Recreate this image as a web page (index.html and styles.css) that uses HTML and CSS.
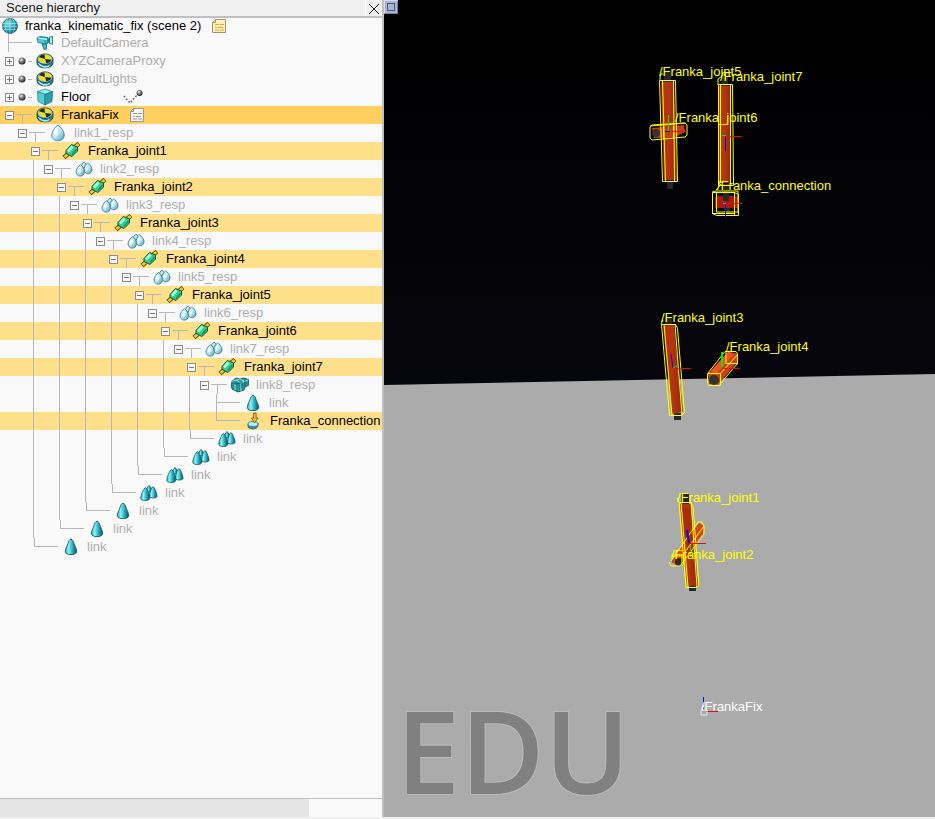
FILE: index.html
```
<!DOCTYPE html>
<html lang="en">
<head>
<meta charset="utf-8">
<title>Scene hierarchy</title>
<link rel="stylesheet" href="styles.css">
</head>
<body>
<svg class="sprites" aria-hidden="true">
  <defs>
    <linearGradient id="g-egg" x1="0" x2="1" y1="0" y2="1"><stop offset="0" stop-color="#f2ffff"/><stop offset=".55" stop-color="#b2e6f5"/><stop offset="1" stop-color="#4a9ab2"/></linearGradient>
    <linearGradient id="g-cone" x1="0" x2="1"><stop offset="0" stop-color="#23b5bd"/><stop offset=".3" stop-color="#8cf4f6"/><stop offset=".6" stop-color="#2fb3c2"/><stop offset="1" stop-color="#0b4f68"/></linearGradient>
    <radialGradient id="g-ball" cx=".4" cy=".35" r=".7"><stop offset="0" stop-color="#fff"/><stop offset=".3" stop-color="#999"/><stop offset="1" stop-color="#111"/></radialGradient>
    <radialGradient id="g-globe" cx=".4" cy=".35" r=".7"><stop offset="0" stop-color="#7fe0e4"/><stop offset=".6" stop-color="#2a9fae"/><stop offset="1" stop-color="#0d5068"/></radialGradient>
    <symbol id="globe" viewBox="0 0 18 18"><circle cx="9" cy="9" r="7.500" fill="url(#g-globe)" stroke="#1d6175" stroke-width=".8"/><path d="M2 6.500h14M1.500 9.500h15M3 12.500h12M9 1.500v15M6.500 2c-3 4-3 10 0 14M11.500 2c3 4 3 10 0 14" fill="none" stroke="#b9f3f2" stroke-width=".5"/></symbol>
    <symbol id="camera" viewBox="0 0 18 18"><path d="M1 4l3-1.500 8 1V9l-2 1-8-1.500z" fill="#2fb0ba" stroke="#176a77" stroke-width=".8"/><path d="M2 4.200l9 1" fill="none" stroke="#b5f7f5" stroke-width="1.500"/><path d="M2 6v2l6 1V6.500z" fill="#4fd3d9"/><path d="M12 4.500l2-.5v5l-2-.5z" fill="#1d8290"/><path d="M13.500 3l3-.7v8l-3-.8z" fill="#9eeef2" stroke="#24606b" stroke-width=".8"/><path d="M6 10h4.500v5L8 15.500z" fill="#38bdc6" stroke="#1b6c7a" stroke-width=".8"/></symbol>
    <symbol id="dummy" viewBox="0 0 18 18"><path d="M1 7.500v3.500c0 6.500 16 6.500 16 0V7.500z" fill="#2d7f99" stroke="#123c4b" stroke-width=".8"/><path d="M2.500 11c2 4 8 5 11 2.500" fill="none" stroke="#a9eef4" stroke-width="1.600"/><ellipse cx="9" cy="7.200" rx="8" ry="5.300" fill="#70bfcb" stroke="#174656" stroke-width=".9"/><ellipse cx="9" cy="6.900" rx="6.500" ry="4.300" fill="#f0dc22"/><path d="M9 6.900L3 5.200C4 3.600 6 2.700 8.500 2.600zM9 6.900l6.400.8c-.4 1.700-2.400 3-5 3.500z" fill="#222820"/></symbol>
    <symbol id="cube" viewBox="0 0 18 18"><path d="M9 1l7.500 2.500L9 6.500 1.500 3.500z" fill="#8ff0ed" stroke="#237985" stroke-width=".7"/><path d="M1.500 3.500L9 6.500V17l-7-3.500z" fill="#4fcfd2" stroke="#237985" stroke-width=".7"/><path d="M16.500 3.500L9 6.500V17l7-3.500z" fill="#2a9fa8" stroke="#1c6873" stroke-width=".7"/></symbol>
    <symbol id="egg" viewBox="0 0 18 18"><path d="M9 1.200C6 3 2.800 7.500 2.800 11c0 3.700 2.500 5.700 6.200 5.700s6.200-2 6.200-5.700c0-3.500-3.200-8-6.200-9.800z" fill="url(#g-egg)" stroke="#3b7183" stroke-width=".8"/><ellipse cx="7" cy="8" rx="2" ry="3.500" fill="#fff"/></symbol>
    <symbol id="eggs" viewBox="0 0 18 18"><g fill="url(#g-egg)" stroke="#3b7183" stroke-width=".8"><path d="M9 2c-2 1-3 4-2 6h4c1-2 0-5-2-6z"/><path d="M12.500 3c-2 1.500-3.800 4.500-3.500 7 .4 5 7.500 5 8 0 .3-3-2.500-6-4.500-7z"/><path d="M5.500 4.500C3.500 6 1 9 1 12c.4 5.500 8 5.500 8.400 0 .1-3-2-6-3.900-7.500z"/></g><ellipse cx="4.500" cy="10" rx="1.400" ry="2.600" fill="#fff"/><ellipse cx="12" cy="8" rx="1.200" ry="2.400" fill="#fff"/></symbol>
    <symbol id="joint" viewBox="0 0 18 18"><path d="M13 5l4-3.500M6 12l-4 3.500" stroke="#5c4200" stroke-width="4.400"/><path d="M13 5l3.500-3M6 12l-3.500 3" stroke="#f5cf20" stroke-width="2.800"/><path d="M9.500 2.500L15.500 5v4L10 14.500l-6-3v-3z" fill="#2fd08e" stroke="#134d38" stroke-width="1"/><path d="M10.500 4.500L6 9.500" stroke="#a8ffdc" stroke-width="2.800"/><path d="M14.500 7L10 12.500" stroke="#18935f" stroke-width="1.500"/></symbol>
    <symbol id="cone" viewBox="0 0 18 18"><path d="M9 1.300C7.500 1.300 6.800 3 6 5.500 5 8.500 3.300 11 3.300 13.500c.2 4.200 11.200 4.200 11.400 0 0-2.500-1.700-5-2.700-8-.8-2.500-1.500-4.200-3-4.200z" fill="url(#g-cone)" stroke="#1f5665" stroke-width=".9"/></symbol>
    <symbol id="cones" viewBox="0 0 18 18"><g fill="url(#g-cone)" stroke="#145563" stroke-width=".8"><path d="M9 1.500C7.500 2 6 7 6.500 8h5C12 7 10.500 2 9 1.500z"/><path d="M13 2.500c-1.500.5-4 8-3.600 10 .6 2 7 2 7.600 0 .3-2-2.500-9.500-4-10z"/><path d="M5.500 3.500c-1.700.5-5 8.500-4.700 11 .6 2.700 8.400 2.700 8.900 0 .3-2.500-2.500-10.500-4.200-11z"/></g></symbol>
    <symbol id="blocks" viewBox="0 0 18 18"><path d="M0 6l5-4 4 1 4-1 5 2v5l-4 2-1 3-6 2-6-3z" fill="#269399" stroke="#145159" stroke-width=".9"/><path d="M0 6l5-2 5 3v8M5 4l4-1 4 2-3 2M10 7l7-3M4 8v6" fill="none" stroke="#8be8df" stroke-width="1"/><path d="M1 6l3 2 6-1M11 6v6M14 5v5" fill="none" stroke="#17676d"/></symbol>
    <symbol id="sensor" viewBox="0 0 18 18"><path d="M4 12v2.500c1 3.500 10 3 10-1V11z" fill="#3193ad" stroke="#16566c" stroke-width=".8"/><ellipse cx="9" cy="12" rx="5" ry="2.500" fill="#b5f0f6" stroke="#28758c" stroke-width=".8"/><path d="M9.500 1h2.600v5h2L10.500 11 7.500 6h2z" fill="#f3b92d" stroke="#74501b" stroke-width=".8"/></symbol>
    <symbol id="ball" viewBox="0 0 8 8"><circle cx="4" cy="4" r="3.500" fill="url(#g-ball)"/></symbol>
    <symbol id="script" viewBox="0 0 16 16"><path class="paper" d="M4.500 1.500h10v13h-13v-10z"/><path class="fold" d="M1.500 4.500h3v-3"/><path class="ink" d="M4 6.500h4m1 0h4M4 9.500h2m1 0h5M4 12h4m1 0h4"/></symbol>
    <symbol id="dynamic" viewBox="0 0 20 16"><path d="M1 7l6 7 8-9" fill="none" stroke="#444" stroke-width="1.300" stroke-dasharray="1.500 2"/><circle cx="16.500" cy="4" r="3" fill="url(#g-ball)"/></symbol>
  </defs>
</svg>
<main class="app">
  <section class="panel" aria-labelledby="panel-title">
    <header class="panel-head">
      <h1 id="panel-title">Scene hierarchy</h1>
      <button class="close" aria-label="Close"><svg viewBox="0 0 12 12"><path d="M1 1l10 10M11 1L1 11"/></svg></button>
    </header>
    <ul class="tree">
      <li class="row root"><svg class="icon"><use href="#globe"/></svg><span class="name">franka_kinematic_fix (scene 2)</span><svg class="badge amber"><use href="#script"/></svg></li>
      <li class="row dim"><i class="branch more"></i><svg class="icon"><use href="#camera"/></svg><span class="name">DefaultCamera</span></li>
      <li class="row dim"><button class="toggle closed" aria-label="Expand"></button><svg class="ball"><use href="#ball"/></svg><i class="dash"></i><svg class="icon"><use href="#dummy"/></svg><span class="name">XYZCameraProxy</span></li>
      <li class="row dim"><button class="toggle closed" aria-label="Expand"></button><svg class="ball"><use href="#ball"/></svg><i class="dash"></i><svg class="icon"><use href="#dummy"/></svg><span class="name">DefaultLights</span></li>
      <li class="row"><button class="toggle closed" aria-label="Expand"></button><svg class="ball"><use href="#ball"/></svg><i class="dash"></i><svg class="icon"><use href="#cube"/></svg><span class="name">Floor</span><svg class="badge motion"><use href="#dynamic"/></svg></li>
      <li class="row last-picked"><button class="toggle" aria-label="Collapse"></button><i class="tee"></i><svg class="icon"><use href="#dummy"/></svg><span class="name">FrankaFix</span><svg class="badge"><use href="#script"/></svg></li>
      <li class="row dim" style="--depth:1"><i class="indent"></i><button class="toggle" aria-label="Collapse"></button><i class="tee"></i><svg class="icon"><use href="#egg"/></svg><span class="name">link1_resp</span></li>
      <li class="row picked" style="--depth:2"><i class="indent"></i><button class="toggle" aria-label="Collapse"></button><i class="tee"></i><svg class="icon"><use href="#joint"/></svg><span class="name">Franka_joint1</span></li>
      <li class="row dim" style="--depth:3"><i class="indent"></i><button class="toggle" aria-label="Collapse"></button><i class="tee"></i><svg class="icon"><use href="#eggs"/></svg><span class="name">link2_resp</span></li>
      <li class="row picked" style="--depth:4"><i class="indent"></i><button class="toggle" aria-label="Collapse"></button><i class="tee"></i><svg class="icon"><use href="#joint"/></svg><span class="name">Franka_joint2</span></li>
      <li class="row dim" style="--depth:5"><i class="indent"></i><button class="toggle" aria-label="Collapse"></button><i class="tee"></i><svg class="icon"><use href="#eggs"/></svg><span class="name">link3_resp</span></li>
      <li class="row picked" style="--depth:6"><i class="indent"></i><button class="toggle" aria-label="Collapse"></button><i class="tee"></i><svg class="icon"><use href="#joint"/></svg><span class="name">Franka_joint3</span></li>
      <li class="row dim" style="--depth:7"><i class="indent"></i><button class="toggle" aria-label="Collapse"></button><i class="tee"></i><svg class="icon"><use href="#eggs"/></svg><span class="name">link4_resp</span></li>
      <li class="row picked" style="--depth:8"><i class="indent"></i><button class="toggle" aria-label="Collapse"></button><i class="tee"></i><svg class="icon"><use href="#joint"/></svg><span class="name">Franka_joint4</span></li>
      <li class="row dim" style="--depth:9"><i class="indent"></i><button class="toggle" aria-label="Collapse"></button><i class="tee"></i><svg class="icon"><use href="#eggs"/></svg><span class="name">link5_resp</span></li>
      <li class="row picked" style="--depth:10"><i class="indent"></i><button class="toggle" aria-label="Collapse"></button><i class="tee"></i><svg class="icon"><use href="#joint"/></svg><span class="name">Franka_joint5</span></li>
      <li class="row dim" style="--depth:11"><i class="indent"></i><button class="toggle" aria-label="Collapse"></button><i class="tee"></i><svg class="icon"><use href="#eggs"/></svg><span class="name">link6_resp</span></li>
      <li class="row picked" style="--depth:12"><i class="indent"></i><button class="toggle" aria-label="Collapse"></button><i class="tee"></i><svg class="icon"><use href="#joint"/></svg><span class="name">Franka_joint6</span></li>
      <li class="row dim" style="--depth:13"><i class="indent"></i><button class="toggle" aria-label="Collapse"></button><i class="tee"></i><svg class="icon"><use href="#eggs"/></svg><span class="name">link7_resp</span></li>
      <li class="row picked" style="--depth:14"><i class="indent"></i><button class="toggle" aria-label="Collapse"></button><i class="tee"></i><svg class="icon"><use href="#joint"/></svg><span class="name">Franka_joint7</span></li>
      <li class="row dim" style="--depth:15"><i class="indent"></i><button class="toggle" aria-label="Collapse"></button><i class="tee"></i><svg class="icon"><use href="#blocks"/></svg><span class="name">link8_resp</span></li>
      <li class="row dim" style="--depth:16"><i class="indent"></i><i class="branch more"></i><svg class="icon"><use href="#cone"/></svg><span class="name">link</span></li>
      <li class="row picked" style="--depth:16"><i class="indent"></i><i class="branch"></i><svg class="icon"><use href="#sensor"/></svg><span class="name">Franka_connection</span></li>
      <li class="row dim" style="--depth:14"><i class="indent"></i><i class="branch"></i><svg class="icon"><use href="#cones"/></svg><span class="name">link</span></li>
      <li class="row dim" style="--depth:12"><i class="indent"></i><i class="branch"></i><svg class="icon"><use href="#cones"/></svg><span class="name">link</span></li>
      <li class="row dim" style="--depth:10"><i class="indent"></i><i class="branch"></i><svg class="icon"><use href="#cones"/></svg><span class="name">link</span></li>
      <li class="row dim" style="--depth:8"><i class="indent"></i><i class="branch"></i><svg class="icon"><use href="#cones"/></svg><span class="name">link</span></li>
      <li class="row dim" style="--depth:6"><i class="indent"></i><i class="branch"></i><svg class="icon"><use href="#cone"/></svg><span class="name">link</span></li>
      <li class="row dim" style="--depth:4"><i class="indent"></i><i class="branch"></i><svg class="icon"><use href="#cone"/></svg><span class="name">link</span></li>
      <li class="row dim" style="--depth:2"><i class="indent"></i><i class="branch"></i><svg class="icon"><use href="#cone"/></svg><span class="name">link</span></li>
    </ul>
    <div class="scroll"><div class="thumb"></div></div>
  </section>
  <section class="view" aria-label="Scene view">
    <svg class="scene" viewBox="384 0 551 817" preserveAspectRatio="xMinYMin slice">
      <defs>
        <linearGradient id="sky" x1="0" x2="0" y1="0" y2="1"><stop offset="0" stop-color="#000"/><stop offset="1" stop-color="#06060d"/></linearGradient>
        <linearGradient id="rod" x1="0" x2="1"><stop offset="0" stop-color="#b93212"/><stop offset=".5" stop-color="#b33413"/><stop offset="1" stop-color="#8f290e"/></linearGradient>
      </defs>
      <rect x="384" width="551" height="400" fill="url(#sky)"/>
      <path d="M384 385L935 374V817H384z" fill="#ababab"/>
      <text class="edu" x="396" y="794">EDU</text>

      <g class="cap"><path d="M664 72h7v10h-7zM667 181h6v8h-6zM722 72h6v14h-6zM723 184h6v12h-6z"/></g>
      <path d="M661 82h13l3 98h-13z" fill="url(#rod)"/>
      <path d="M652 128l32-3 1 7-10 5-21 1z" fill="#c53d17"/>
      <circle cx="656" cy="133" r="4" fill="#333"/>
      <path d="M719 86h12v97h-12z" fill="url(#rod)"/>
      <path d="M715 197l3-1h18l2 1v11h-23z" fill="#b11414"/>
      <path class="cap" d="M723 192h6v9h-6zM724 208h6v6h-6z"/>
      <g class="wire">
        <path d="M659.500 80.500h16l2 101h-15zM662.500 80.500l3 101M660 80v-3l1-3h2M673.500 80.500l1 101M650 127l2-2 33-2 2 2v10l-2 2-33 3-2-2zM650 126l24-2 11-1M673.500 126v13M663.500 126v13"/>
        <path d="M718.500 84.500h14l1 101h-15zM720.500 84v99M730.500 84v100M718 85v-6l4-3M716 190l2-2 3-4"/>
        <path d="M712.500 192.500h22l4 2v21h-22l-4-2zM716.500 192v20h22M734.500 192v23M712 192l4-1h22v21M712 213.500h22"/>
      </g>
      <g class="axis"><path class="z" d="M725.500 136v15M725.500 204v14M665 131.500h5"/><path class="y" d="M668.500 115v16M722 135.500h4M723 203.500h3"/><path class="x" d="M672 131.500h14M725 136.500h17M727 203.500h15"/></g>

      <g class="cap"><path d="M665 318h7v8h-7zM674 413h7v7h-7z"/></g>
      <path d="M663 326l11-1 9 87-11 2z" fill="url(#rod)"/>
      <path d="M708 374l20-22 9 1 1 8-20 24-9-1z" fill="#c9401b"/>
      <path d="M713 373l18-20" stroke="#ec5325" stroke-width="6"/>
      <circle cx="714" cy="380" r="5" fill="#303629"/>
      <g class="wire"><path d="M661.500 324.500h14l2 4 7 84-3 3h-12zM664 324l8 91M675 324l7 91M661 324l2-4M707.500 373.500h13v12h-12l-1-2zM708 373l17-21.500h11l1.500 2v10l-17 20M721 373l17-19M726 352v11.500h12"/></g>
      <g class="axis"><path class="z" d="M673 368l-2-14"/><path class="y thick" d="M722 352v15"/><path class="y" d="M673 368l5-3"/><path class="x" d="M674 368.500h17M724 368.500h16"/></g>

      <path class="cap" d="M681 494h8v10h-8zM689 586h7v5h-7z"/>
      <path d="M680 504h11l7 82h-11z" fill="url(#rod)"/>
      <path d="M672 560l27-37 5 3-1 8-24 31-7-2z" fill="#d14720"/>
      <path d="M682 508h9l5 51h-9z" fill="#a82d0f"/>
      <circle cx="679" cy="562" r="4" fill="#2c2c24"/>
      <g class="wire"><path d="M679 502.500h12l2 4 6 79-3 2h-10zM681 502l7 85M691 502l6 85M671 561l27-39h4l2 4v8l-24 32h-9l-2-4M671 556h11v10M682 556l22-30M679 502l-2-4"/></g>
      <g class="axis"><path class="z thick" d="M689 543l-2-13"/><path class="y" d="M690.500 546v11"/><path class="x" d="M690 543.500h16"/></g>

      <g class="axis"><path class="z" d="M703.500 697v12"/><path class="y" d="M706.500 704v7"/><path class="x" d="M706 711.500h12"/></g>
      <path d="M701 711v4h6v-5h-5l2-5" fill="none" stroke="#eee"/>

      <g class="labels">
        <text x="659" y="76">/Franka_joint5</text>
        <text x="720" y="81">/Franka_joint7</text>
        <text x="675" y="122">/Franka_joint6</text>
        <text x="717" y="190">/Franka_connection</text>
        <text x="661" y="322">/Franka_joint3</text>
        <text x="726" y="351">/Franka_joint4</text>
        <text x="677" y="502">/Franka_joint1</text>
        <text x="671" y="559">/Franka_joint2</text>
        <text class="base" x="701" y="711">/FrankaFix</text>
      </g>
    </svg>
    <button class="view-button" aria-label="View options"></button>
  </section>
</main>
</body>
</html>
```
FILE: styles.css
```
* { box-sizing: border-box; }

body {
  margin: 0;
  background: #f0f0f0;
  color: #000;
  font: 13px/18px "Liberation Sans", Arial, sans-serif;
}

button { padding: 0; border: 0; border-radius: 0; }
.sprites { position: absolute; width: 0; height: 0; }

.app {
  display: grid;
  grid-template-columns: 384px 1fr;
  height: 100vh;
  padding-bottom: 2px;
}

/* Hierarchy panel */
.panel {
  display: flex;
  flex-direction: column;
  min-width: 0;
  min-height: 0;
  background: #f9f9f9;
  border-right: 2px solid #c0c0c0;
}
.panel-head {
  display: flex;
  flex: none;
  height: 18px;
  background: #f0f0f0;
  border-bottom: 2px solid #c0c0c0;
}
.panel-head h1 {
  flex: 1;
  margin: 0;
  padding-left: 6px;
  font-size: 13px;
  font-weight: 400;
  line-height: 15px;
  color: #222;
}
.close {
  width: 17px;
  background: #f0f0f0;
  border-left: 1px solid #fff;
}
.close svg { display: block; width: 12px; height: 12px; margin: 2px auto 0; }
.close path { stroke: #222; stroke-width: 1; }

.tree {
  flex: 1;
  min-height: 0;
  margin: 0;
  padding: 0;
  overflow: hidden;
  list-style: none;
}
.row {
  display: flex;
  align-items: center;
  height: 18px;
  padding-left: 5px;
  white-space: nowrap;
}
.root { height: 16px; padding-left: 1px; }
.root .name { margin-left: 6px; }
.dim { color: #aeaeae; }
.picked { background: #ffe08a; }
.last-picked { background: #ffd060; }

.icon { flex: none; width: 18px; height: 18px; }
.name { margin-left: 7px; }
.picked .name { margin-left: 8px; }

/* Ancestor guides run through every second level */
.indent {
  flex: none;
  align-self: stretch;
  width: calc((var(--depth) - 1) * 13px);
  margin-left: 13px;
  background: repeating-linear-gradient(90deg, transparent 0 15px, #b8b8b8 15px 16px, transparent 16px 26px);
}

.toggle {
  position: relative;
  flex: none;
  width: 9px;
  height: 9px;
  margin-right: 1px;
  border: 1px solid #8c8c8c;
  background: linear-gradient(#777, #777) center / 5px 1px no-repeat #fafafa;
}
.closed {
  background:
    linear-gradient(#777, #777) center / 5px 1px no-repeat,
    linear-gradient(#777, #777) center / 1px 5px no-repeat,
    #fafafa;
}
.tee {
  flex: none;
  align-self: stretch;
  width: 16px;
  margin: 0 4px 0 1px;
  background:
    linear-gradient(#b8b8b8, #b8b8b8) 0 8px / 16px 1px no-repeat,
    linear-gradient(#b8b8b8, #b8b8b8) 6px 8px / 1px 10px no-repeat;
}
.branch {
  flex: none;
  align-self: stretch;
  width: 24px;
  margin: 0 4px 0 3px;
  background:
    linear-gradient(#b8b8b8, #b8b8b8) 0 8px / 24px 1px no-repeat,
    linear-gradient(#b8b8b8, #b8b8b8) 0 0 / 1px 9px no-repeat;
}
.more {
  background:
    linear-gradient(#b8b8b8, #b8b8b8) 0 8px / 24px 1px no-repeat,
    linear-gradient(#b8b8b8, #b8b8b8) 0 0 / 1px 18px no-repeat;
}
.ball { flex: none; width: 8px; height: 8px; margin-left: 3px; }
.dash { width: 4px; height: 1px; margin: 0 4px 0 2px; background: #b8b8b8; }

.badge { flex: none; width: 16px; height: 16px; margin-left: 10px; }
.motion { width: 20px; margin-left: 32px; }
.badge { --paper: #f4f4ee; --edge: #999; --ink: #999; }
.amber { --paper: #fff1c4; --edge: #a89565; --ink: #efa20b; }
.paper { fill: var(--paper); stroke: var(--edge); }
.fold { fill: none; stroke: var(--edge); }
.ink { stroke: var(--ink); }

.scroll {
  flex: none;
  height: 19px;
  border-top: 1px solid #c0c0c0;
}
.thumb { width: 81%; height: 18px; background: #e4e4e4; }

/* Scene view */
.view { position: relative; min-width: 0; min-height: 0; overflow: hidden; background: #ababab; }
.scene { display: block; width: 100%; height: 100%; }
.view-button {
  position: absolute;
  top: 0;
  left: 0;
  display: grid;
  place-items: center;
  width: 14px;
  height: 14px;
  background: #a6b5d5;
  border: 1px solid #76849f;
  border-top-color: #d5dff0;
  border-left-color: #d5dff0;
}
.view-button::before { content: ""; width: 6px; height: 6px; border: 1px solid #555; }

.wire { fill: none; stroke: #ff0; stroke-width: 1; }
.cap { fill: #262626; }
.axis { fill: none; stroke-width: 1; }
.x { stroke: #e01010; }
.y { stroke: #0e0; }
.z { stroke: #11c; }
.thick { stroke-width: 2; }
.labels { font-size: 13px; fill: #ff0; }
.labels .base { fill: #fff; }
.edu {
  font: 600 115px "Open Sans", "Noto Sans", sans-serif;
  fill: #808080;
  stroke: #bababa;
  stroke-width: 2px;
  paint-order: stroke;
}
```
